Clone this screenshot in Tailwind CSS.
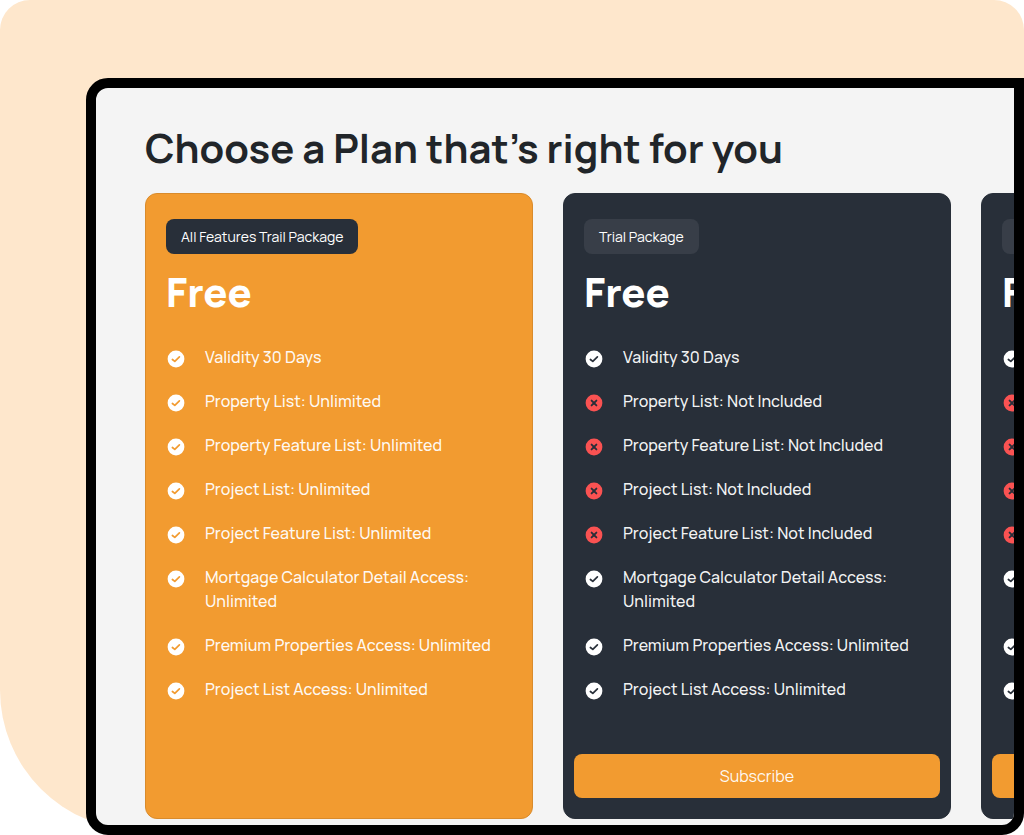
<!DOCTYPE html>
<html lang="en">
<head>
    <meta charset="UTF-8">
    <meta name="viewport" content="width=device-width, initial-scale=1.0">
    <title>Choose a Plan</title>
    <script src="https://cdn.jsdelivr.net/npm/@tailwindcss/browser@4"></script>
</head>
<body class="bg-white font-['Manrope','Inter',sans-serif]">
    <!-- Icon sprites -->
    <svg class="hidden" aria-hidden="true">
        <symbol id="icon-check" viewBox="0 0 18 18">
            <circle cx="9" cy="9" r="8.4" fill="white"/>
            <path d="M5.4 9.5 7.8 11.4 12.4 6.9" fill="none" stroke="currentColor" stroke-width="1.7" stroke-linecap="round" stroke-linejoin="round"/>
        </symbol>
        <symbol id="icon-cross" viewBox="0 0 18 18">
            <circle cx="9" cy="9" r="8.4" fill="#fa5252"/>
            <path d="M6.6 6.6 11.4 11.4M11.4 6.6 6.6 11.4" fill="none" stroke="currentColor" stroke-width="1.9" stroke-linecap="round"/>
        </symbol>
    </svg>

    <div class="relative isolate min-h-screen flex flex-col pt-[78px] pl-[86px]">
        <!-- Peach backdrop -->
        <div class="absolute -z-10 inset-x-0 top-0 bottom-[5px] bg-[#fee7cc] rounded-t-[30px] rounded-bl-[140px] rounded-br-[30px]"></div>

        <!-- Device frame -->
        <main class="flex-1 flex flex-col min-w-0 overflow-hidden bg-[#f4f4f4] border-10 border-black rounded-[22px] rounded-tr-none pt-[35px] pb-[6px] pl-[49px]">
            <h1 class="text-[40px] leading-[50px] font-bold text-[#212529] whitespace-nowrap">Choose a Plan that’s right for you</h1>
            <div id="plans" class="flex-1 flex gap-[30px] mt-5"></div>
        </main>
    </div>

    <script>
        const limited = [
            ['Validity 30 Days', true],
            ['Property List: Not Included', false],
            ['Property Feature List: Not Included', false],
            ['Project List: Not Included', false],
            ['Project Feature List: Not Included', false],
            ['Mortgage Calculator Detail Access: Unlimited', true],
            ['Premium Properties Access: Unlimited', true],
            ['Project List Access: Unlimited', true],
        ];

        const plans = [
            {
                name: 'All Features Trail Package',
                active: true,
                features: limited.map(([text]) => [text.replace('Not Included', 'Unlimited'), true]),
            },
            { name: 'Trial Package', features: limited },
            { name: 'Basic Package', features: limited },
        ];

        // --- Render plan cards ---
        document.getElementById('plans').innerHTML = plans.map((plan) => `
            <section class="${plan.active ? 'bg-[#f29b30] border-[#d98b2c] text-[#f29b30]' : 'bg-[#282f39] border-[#282f39] text-[#282f39]'} w-[388px] shrink-0 flex flex-col border rounded-xl px-5 pt-[25px] pb-5">
                <p class="${plan.active ? 'bg-[#282f39]' : 'bg-[#383e48]'} self-start rounded-lg px-[15px] h-[35px] leading-[35px] text-[14px] text-white">${plan.name}</p>
                <h2 class="mt-[13px] text-[40px] leading-[50px] font-extrabold text-white">Free</h2>
                <ul class="mt-[28px] flex flex-col gap-5">
                    ${plan.features.map(([text, included]) => `
                        <li class="flex items-start gap-5 text-base leading-6">
                            <svg class="ml-px mt-[5px] w-[18px] h-[18px] shrink-0" aria-hidden="true"><use href="${included ? '#icon-check' : '#icon-cross'}"/></svg>
                            <span class="text-white/95 font-medium">${text}</span>
                        </li>`).join('')}
                </ul>
                ${plan.active ? '' : '<button type="button" class="mt-auto -mx-[10px] h-11 shrink-0 rounded-lg bg-[#f29b30] text-base text-white/95 cursor-pointer">Subscribe</button>'}
            </section>`).join('');
    </script>
</body>
</html>
